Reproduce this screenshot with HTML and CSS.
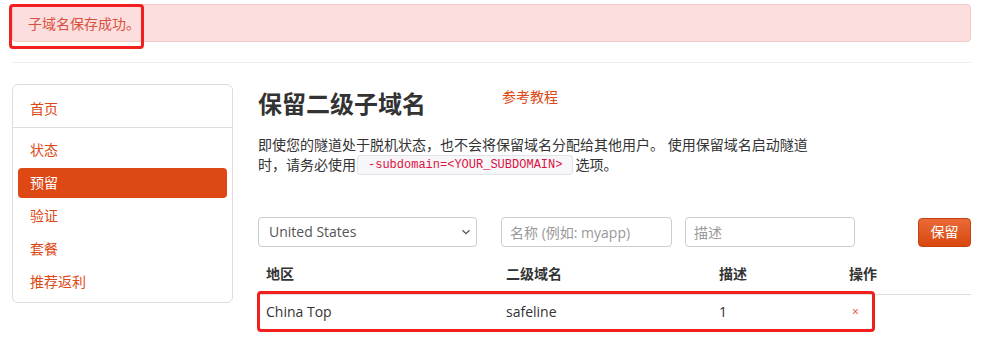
FILE: index.html
```html
<!DOCTYPE html>
<html lang="zh-CN">
<head>
<meta charset="utf-8">
<title>保留二级子域名</title>
<link rel="stylesheet" href="styles.css">
</head>
<body>
<div class="page">
  <div class="alert">
    子域名保存成功。
    <span class="mark mark-alert"></span>
  </div>
  <hr class="sep">
  <div class="layout">
    <aside class="side">
      <ul class="nav">
        <li><a href="#">首页</a></li>
        <li class="divider"></li>
        <li><a href="#">状态</a></li>
        <li class="active"><a href="#">预留</a></li>
        <li><a href="#">验证</a></li>
        <li><a href="#">套餐</a></li>
        <li><a href="#">推荐返利</a></li>
      </ul>
    </aside>
    <main class="main">
      <div class="head">
        <h2 class="title">保留二级子域名</h2>
        <a class="help" href="#">参考教程</a>
      </div>
      <p class="desc">即使您的隧道处于脱机状态，也不会将保留域名分配给其他用户。 使用保留域名启动隧道时，请务必使用<code>-subdomain=&lt;YOUR_SUBDOMAIN&gt;</code>选项。</p>
      <form class="form">
        <div class="select-wrap">
          <select class="select">
            <option>United States</option>
            <option>China Top</option>
          </select>
          <svg class="chev" width="10" height="6" viewBox="0 0 10 6"><path d="M1.5 1.2 L5 4.6 L8.5 1.2" fill="none" stroke="#555" stroke-width="1.3"/></svg>
        </div>
        <input class="input in-name" type="text" placeholder="名称 (例如: myapp)">
        <input class="input in-desc" type="text" placeholder="描述">
        <button class="btn" type="button">保留</button>
      </form>
      <div class="table-wrap">
        <table class="table">
          <thead>
            <tr><th class="c1">地区</th><th class="c2">二级域名</th><th class="c3">描述</th><th class="c4">操作</th></tr>
          </thead>
          <tbody>
            <tr><td>China Top</td><td>safeline</td><td>1</td><td><a class="del" href="#">×</a></td></tr>
          </tbody>
        </table>
        <span class="mark mark-row"></span>
      </div>
    </main>
  </div>
</div>
</body>
</html>
```
FILE: styles.css
```css
* { box-sizing: border-box; }
html, body { margin: 0; padding: 0; background: #fff; }
body {
  font-family: "Open Sans", "Noto Sans CJK SC", sans-serif;
  font-size: 14px;
  line-height: 20px;
  color: #333;
}
.page { width: 959px; margin-left: 12px; padding-top: 4px; }

.alert {
  position: relative;
  height: 38px;
  padding: 0 15px;
  line-height: 38px;
  background: #fbdedd;
  border: 1px solid #f4c9c8;
  border-radius: 4px;
  color: #d9503f;
}
.mark {
  position: absolute;
  border: 3px solid #f21f1f;
  border-radius: 4px;
  pointer-events: none;
}
.mark-alert { left: -4px; top: -1px; width: 135px; height: 45px; }

.sep { border: 0; border-top: 1px solid #eee; margin: 20px 0 21px; height: 0; }

.layout { display: flex; align-items: flex-start; }
.side {
  width: 221px;
  border: 1px solid #ddd;
  border-radius: 6px;
  padding: 9px 0 2px;
  flex: none;
}
.nav { list-style: none; margin: 0; padding: 0; }
.nav li { margin: 0 5px 3px; }
.nav li a {
  display: block;
  padding: 5px 12px 5px 12px;
  line-height: 20px;
  color: #dd4814;
  text-decoration: none;
  border-radius: 4px;
}
.nav li.active a { background: #dd4814; color: #fff; }
.nav li.divider { margin: 1px 0 7px; height: 1px; background: #ddd; }

.main { margin-left: 25px; flex: 1; }
.head { display: flex; align-items: flex-start; margin-top: 3px; }
.title { margin: 0; font-size: 24px; line-height: 34px; font-weight: bold; color: #333; }
.help { margin-left: 76px; color: #dd4814; text-decoration: none; line-height: 20px; font-size: 14px; }

.desc { margin: 14px 0 0; width: 556px; line-height: 20px; color: #333; }
code {
  display: inline-block;
  vertical-align: top;
  font-family: "Liberation Mono", monospace;
  font-size: 12px;
  line-height: 18px;
  color: #dd1144;
  background: #f7f7f9;
  border: 1px solid #e1e1e8;
  border-radius: 3px;
  padding: 0 10px;
  margin: 0 2px 0 1px;
}

.form { display: flex; align-items: center; margin-top: 42px; height: 30px; }
.select-wrap { position: relative; width: 219px; height: 30px; flex: none; }
.select {
  appearance: none;
  -webkit-appearance: none;
  width: 100%;
  height: 30px;
  padding: 0 10px;
  font: inherit;
  color: #555;
  background: #fff;
  border: 1px solid #ccc;
  border-radius: 4px;
}
.chev { position: absolute; right: 6px; top: 12px; }
.input {
  height: 30px;
  padding: 0 8px;
  font: inherit;
  color: #555;
  border: 1px solid #ccc;
  border-radius: 4px;
  background: #fff;
  flex: none;
}
.input::placeholder { color: #999; }
.in-name { width: 171px; margin-left: 24px; }
.in-desc { width: 170px; margin-left: 13px; }
.btn {
  margin-left: auto;
  width: 53px;
  height: 29px;
  padding: 0;
  font: inherit;
  color: #fff;
  border: 1px solid #c5400f;
  border-radius: 4px;
  background: linear-gradient(#ea6a37, #d8480f);
}

.table-wrap { position: relative; margin-top: 8px; }
.table { width: 100%; border-collapse: collapse; }
.table th {
  text-align: left;
  font-weight: bold;
  padding: 9px 8px 10px;
  line-height: 20px;
  border-bottom: 1px solid #ddd;
}
.table td { padding: 6px 8px 12px; line-height: 20px; }
.c1 { width: 240px; }
.c2 { width: 213px; }
.c3 { width: 130px; }
.del { color: #e2431b; text-decoration: none; font-size: 12px; margin-left: 3px; }
.mark-row { left: -1px; top: 36px; width: 618px; height: 41px; }
```
